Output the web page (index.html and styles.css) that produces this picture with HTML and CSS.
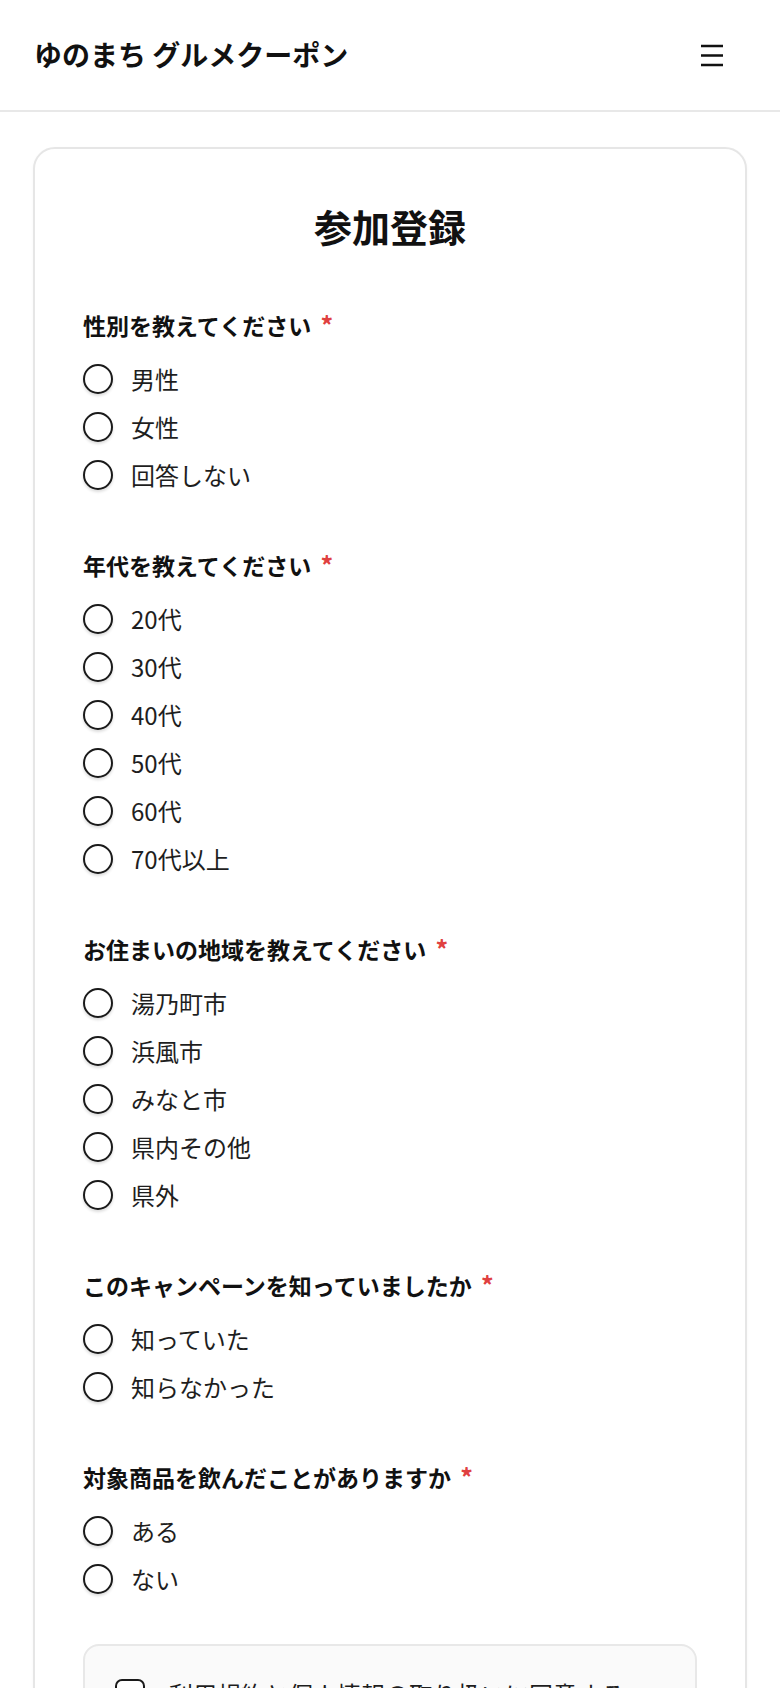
FILE: index.html
```html
<!DOCTYPE html>
<html lang="ja">
<head>
<meta charset="utf-8">
<meta name="viewport" content="width=device-width, initial-scale=1">
<title>参加登録 | ゆのまち グルメクーポン</title>
<link rel="stylesheet" href="styles.css">
</head>
<body>
<header class="site-header">
  <h1 class="site-title">ゆのまち グルメクーポン</h1>
  <button class="menu-btn" type="button" aria-label="メニュー">
    <svg width="24" height="24" viewBox="0 0 24 24" aria-hidden="true">
      <path d="M1 3h22M1 12.5h22M1 22h22" stroke="#111" stroke-width="2.6" fill="none"/>
    </svg>
  </button>
</header>
<main class="main">
  <form class="card">
    <h2 class="card-title">参加登録</h2>

    <fieldset class="question">
      <legend class="q-label">性別を教えてください <span class="req">*</span></legend>
      <label class="option"><input type="radio" name="gender"><span>男性</span></label>
      <label class="option"><input type="radio" name="gender"><span>女性</span></label>
      <label class="option"><input type="radio" name="gender"><span>回答しない</span></label>
    </fieldset>

    <fieldset class="question">
      <legend class="q-label">年代を教えてください <span class="req">*</span></legend>
      <label class="option"><input type="radio" name="age"><span>20代</span></label>
      <label class="option"><input type="radio" name="age"><span>30代</span></label>
      <label class="option"><input type="radio" name="age"><span>40代</span></label>
      <label class="option"><input type="radio" name="age"><span>50代</span></label>
      <label class="option"><input type="radio" name="age"><span>60代</span></label>
      <label class="option"><input type="radio" name="age"><span>70代以上</span></label>
    </fieldset>

    <fieldset class="question">
      <legend class="q-label">お住まいの地域を教えてください <span class="req">*</span></legend>
      <label class="option"><input type="radio" name="area"><span>湯乃町市</span></label>
      <label class="option"><input type="radio" name="area"><span>浜風市</span></label>
      <label class="option"><input type="radio" name="area"><span>みなと市</span></label>
      <label class="option"><input type="radio" name="area"><span>県内その他</span></label>
      <label class="option"><input type="radio" name="area"><span>県外</span></label>
    </fieldset>

    <fieldset class="question">
      <legend class="q-label">このキャンペーンを知っていましたか <span class="req">*</span></legend>
      <label class="option"><input type="radio" name="know"><span>知っていた</span></label>
      <label class="option"><input type="radio" name="know"><span>知らなかった</span></label>
    </fieldset>

    <fieldset class="question">
      <legend class="q-label">対象商品を飲んだことがありますか <span class="req">*</span></legend>
      <label class="option"><input type="radio" name="drank"><span>ある</span></label>
      <label class="option"><input type="radio" name="drank"><span>ない</span></label>
    </fieldset>

    <div class="agree-box">
      <label class="agree"><input type="checkbox" name="agree"><span>利用規約と個人情報の取り扱いに同意する</span></label>
    </div>

    <button class="submit" type="submit">登録する</button>
  </form>
</main>
</body>
</html>
```
FILE: styles.css
```css
* { box-sizing: border-box; }

html, body {
  margin: 0;
  padding: 0;
  background: #ffffff;
  color: #111111;
  font-family: "Noto Sans CJK JP", "Noto Sans", sans-serif;
}

.site-header {
  height: 112px;
  display: flex;
  align-items: center;
  justify-content: space-between;
  padding: 0 56px 0 34px;
  border-bottom: 2px solid #e8e8e8;
  background: #ffffff;
}

.site-title {
  margin: 0;
  font-size: 28px;
  font-weight: 700;
  line-height: 1.2;
  color: #111111;
}

.menu-btn {
  display: flex;
  align-items: center;
  justify-content: center;
  width: 24px;
  height: 24px;
  padding: 0;
  border: 0;
  background: transparent;
}

.menu-btn svg { display: block; }

.main {
  padding: 35px 33px 40px;
}

.card {
  border: 2px solid #e6e6e6;
  border-radius: 22px;
  padding: 50px 48px 48px;
  background: #ffffff;
  box-shadow: 0 1px 3px rgba(0, 0, 0, 0.04);
}

.card-title {
  margin: 0 0 56px;
  text-align: center;
  font-size: 38px;
  font-weight: 700;
  line-height: 54px;
  color: #111111;
}

.question {
  border: 0;
  margin: 0 0 50px;
  padding: 0;
  min-width: 0;
}

.q-label {
  display: block;
  padding: 0;
  margin: 0 0 14px;
  font-size: 23px;
  font-weight: 700;
  line-height: 32px;
  height: 32px;
  color: #111111;
}

.req {
  margin-left: 4px;
  color: #e04040;
  font-size: 25px;
  line-height: 1;
  font-weight: 700;
}

.option {
  display: flex;
  align-items: center;
  gap: 18px;
  height: 48px;
  font-size: 24px;
  line-height: 32px;
  color: #1e1e1e;
}

.option input {
  appearance: none;
  -webkit-appearance: none;
  margin: 0;
  width: 30px;
  height: 30px;
  flex: 0 0 30px;
  border: 2px solid #1a1a1a;
  border-radius: 50%;
  background: #ffffff;
  box-shadow: 0 2px 3px rgba(0, 0, 0, 0.14);
}

.agree-box {
  margin-top: -9px;
  border: 2px solid #e8e8e8;
  border-radius: 16px;
  background: #fafafa;
  padding: 32px 30px;
}

.agree {
  display: flex;
  align-items: center;
  gap: 24px;
  font-size: 24px;
  line-height: 32px;
  color: #1e1e1e;
}

.agree input {
  appearance: none;
  -webkit-appearance: none;
  margin: 0;
  width: 30px;
  height: 30px;
  flex: 0 0 30px;
  border: 2px solid #1a1a1a;
  border-radius: 7px;
  background: #ffffff;
}

.submit {
  display: block;
  width: 100%;
  margin-top: 40px;
  height: 60px;
  border: 0;
  border-radius: 12px;
  background: #222222;
  color: #ffffff;
  font-family: inherit;
  font-size: 22px;
  font-weight: 700;
}
```
